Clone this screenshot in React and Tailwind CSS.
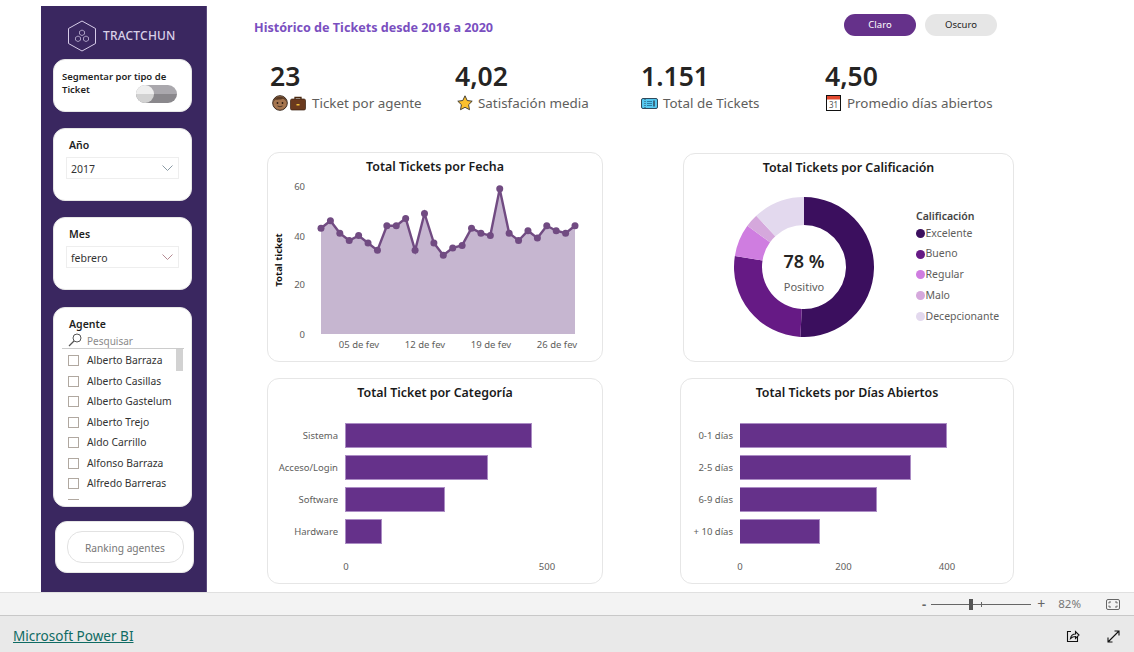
import React from "react";

const vals = [43,46,41,38,40,37,34,44,44,47,34,49,37,32,35,36,43,41,40,59,41,38,42,39,44,42,41,44];

function LineChart() {
  const ox = 268, oy = 176;
  const X = (i) => 321 - ox + (i * 254) / 27;
  const Y = (v) => 334 - oy - v * 2.46;
  const line = vals.map((v, i) => `${X(i).toFixed(1)},${Y(v).toFixed(1)}`).join(" ");
  const area = `${X(0)},${Y(0)} ${line} ${X(27)},${Y(0)}`;
  return (
    <svg width="334" height="184" viewBox="0 0 334 184" className="block">
      <polygon points={area} fill="#c6b6d0" />
      <polyline points={line} fill="none" stroke="#714b82" strokeWidth="2.4" />
      {vals.map((v, i) => <circle key={i} cx={X(i)} cy={Y(v)} r="3.5" fill="#714b82" />)}
      {[[0,335],[20,285],[40,237],[60,187]].map(([t, y]) => (
        <text key={t} x={305 - ox} y={y - oy + 3} textAnchor="end" fontSize="9.5" fill="#605e5c">{t}</text>
      ))}
      {[["05 de fev",359],["12 de fev",425],["19 de fev",491],["26 de fev",557]].map(([t, x]) => (
        <text key={t} x={x - ox} y={344 - oy + 4} textAnchor="middle" fontSize="9.5" fill="#605e5c">{t}</text>
      ))}
      <text transform={`translate(${282 - ox},${260 - oy}) rotate(-90)`} textAnchor="middle" fontSize="9.5" fontWeight="700" fill="#111">Total ticket</text>
    </svg>
  );
}

function arc(a0, a1, R, r, cx, cy) {
  const p = (a, q) => [cx + q * Math.sin((a * Math.PI) / 180), cy - q * Math.cos((a * Math.PI) / 180)];
  const large = a1 - a0 > 180 ? 1 : 0;
  const [x0, y0] = p(a0, R), [x1, y1] = p(a1, R), [x2, y2] = p(a1, r), [x3, y3] = p(a0, r);
  return `M${x0} ${y0}A${R} ${R} 0 ${large} 1 ${x1} ${y1}L${x2} ${y2}A${r} ${r} 0 ${large} 0 ${x3} ${y3}Z`;
}

const donut = [
  { n: "Excelente", c: "#3b0f5e", a: 0, b: 183 },
  { n: "Bueno", c: "#661a85", a: 183, b: 279 },
  { n: "Regular", c: "#cf7de0", a: 279, b: 306 },
  { n: "Malo", c: "#d5a8dc", a: 306, b: 317 },
  { n: "Decepcionante", c: "#e3d9ee", a: 317, b: 360 },
];

function Card({ title, className, children }) {
  return (
    <div className={`border border-[#e6e6e6] rounded-[12px] bg-white flex flex-col ${className}`}>
      <div className="pt-[5px] h-[23px] text-center text-[12.4px] leading-[18px] font-semibold text-[#1a1a1a]">{title}</div>
      {children}
    </div>
  );
}

function Bars({ rows, labelW, outline }) {
  return (
    <div className="mt-[21px] flex flex-col gap-[7px]">
      {rows.map(([l, w]) => (
        <div key={l} className="flex items-center h-[25px]">
          <div className="text-right text-[9.5px] pt-[2px] text-[#605e5c] shrink-0" style={{ width: labelW }}>{l}</div>
          <div className={`ml-[7px] h-[25px] bg-[#65318a] border border-[#ab8cc4] ${outline}`} style={{ width: w }} />
        </div>
      ))}
    </div>
  );
}

function Dropdown({ label, value, chevron, mt }) {
  return (
    <div className={`w-[139px] h-[73px] bg-white rounded-[12px] border border-[#e6e6e6] flex flex-col pl-[12px] ${mt}`}>
      <div className="pl-[3px] pt-[8px] h-[28px] text-[10.5px] leading-[16px] font-semibold text-[#1f1f1f]">{label}</div>
      <div className="w-[113px] h-[22px] border border-[#eeeeee] flex items-center justify-between pl-[4px] pr-[5px] text-[10.5px] text-[#333]">
        <span className="pt-[3px]">{value}</span>
        <svg width="11" height="6" viewBox="0 0 11 6"><path d="M0.5 0.5L5.5 5.5L10.5 0.5" fill="none" stroke={chevron} strokeWidth="1" /></svg>
      </div>
    </div>
  );
}

const agents = ["Alberto Barraza","Alberto Casillas","Alberto Gastelum","Alberto Trejo","Aldo Carrillo","Alfonso Barraza","Alfredo Barreras"];

function Sidebar() {
  return (
    <aside className="w-[166px] h-[586px] bg-[#3a2760] border-r border-[#5b4a7d] shrink-0 flex flex-col pl-[12px]">
      <div className="h-[53px] flex items-center pl-[14px] gap-[6px]">
        <svg width="30" height="32" viewBox="0 0 30 32" className="mt-[7px]" fill="none" stroke="#d6cbe8" strokeWidth="1">
          <path d="M15 1L28.5 8.5V23.5L15 31L1.5 23.5V8.5Z" />
          <path d="M15 10l2.500 1.400v2.800l-2.500 1.400-2.500-1.400v-2.800zM11 16l2.500 1.400v2.800l-2.500 1.400-2.500-1.400v-2.800zM19 16l2.500 1.400v2.800l-2.500 1.400-2.500-1.400v-2.800z" strokeWidth="0.7" />
        </svg>
        <span className="mt-[7px] text-[12px] tracking-[0.2px] text-[#d9d0e8] font-medium">TRACTCHUN</span>
      </div>
      <div className="w-[139px] h-[53px] bg-white rounded-[12px] border border-[#e6e6e6] flex flex-col pl-[8px] pt-[10px]">
        <div className="text-[9.5px] leading-[13px] font-semibold text-[#1f1f1f]">Segmentar por tipo de</div>
        <div className="flex justify-between items-start pr-[14px]">
          <div className="text-[9.5px] leading-[13px] font-semibold text-[#1f1f1f]">Ticket</div>
          <div className="w-[41px] h-[18px] mt-[2px] rounded-full bg-[linear-gradient(#aaa8ad_50%,#8a888c_50%)]">
            <div className="w-[18px] h-[18px] rounded-full bg-[linear-gradient(#eeeeee_50%,#d2d2d2_50%)]" />
          </div>
        </div>
      </div>
      <Dropdown label="Año" value="2017" chevron="#8a9aa5" mt="mt-[16px]" />
      <Dropdown label="Mes" value="febrero" chevron="#b58a92" mt="mt-[16px]" />
      <div className="mt-[17px] w-[139px] h-[200px] bg-white rounded-[12px] border border-[#e6e6e6] overflow-hidden flex flex-col">
        <div className="pl-[15px] pt-[8px] h-[24px] text-[10.5px] leading-[16px] font-semibold text-[#1f1f1f]">Agente</div>
        <div className="ml-[8px] w-[122px] h-[17px] border-b border-[#cccccc] flex items-center pl-[6px] gap-[5px]">
          <svg width="14" height="14" viewBox="0 0 14 14" fill="none" stroke="#555" strokeWidth="1"><circle cx="9" cy="5" r="4" /><path d="M6 8L1 13" strokeWidth="1.2" /></svg>
          <span className="pt-[3px] text-[10px] text-[#8a8a8a]">Pesquisar</span>
        </div>
        <div className="relative h-[151px] overflow-hidden flex flex-col pl-[14px] pt-[1.6px]">
          {agents.concat([""]).map((a, i) => (
            <div key={i} className="h-[20.5px] flex items-center gap-[8px] shrink-0">
              <span className="w-[11px] h-[11px] border border-[#b0a8a0] shrink-0" />
              <span className="text-[10.3px] text-[#333]">{a}</span>
            </div>
          ))}
          <div className="absolute right-[8px] top-0 w-[7px] h-[22px] bg-[#d2d2d2]" />
        </div>
      </div>
      <div className="mt-[14px] ml-[2px] w-[139px] h-[52px] bg-white rounded-[12px] border border-[#e6e6e6] flex items-center justify-center">
        <div className="ml-[1px] pt-[3px] w-[117px] h-[32px] rounded-[15px] border border-[#e2e2e2] flex items-center justify-center text-[10.2px] text-[#777]">Ranking agentes</div>
      </div>
    </aside>
  );
}

const Face = () => (
  <svg width="34" height="16" viewBox="0 0 34 16" className="ml-[2px]">
    <circle cx="8" cy="8" r="7.3" fill="#a5754f" stroke="#3a2a20" strokeWidth="1" />
    <path d="M1.2 7a7 7 0 0 1 13.6 0c-2-2.5-3-3-4-3.2-2 1-6.500 1-7 .7C3 5 2 6 1.200 7z" fill="#5a3a24" />
    <circle cx="5.500" cy="8" r=".9" fill="#2a1a10" /><circle cx="10.500" cy="8" r=".9" fill="#2a1a10" />
    <path d="M5.500 11q2.500 1.500 5 0" fill="none" stroke="#3a2a20" strokeWidth=".8" />
    <path d="M23 4V2.500h6V4" fill="none" stroke="#4a2810" strokeWidth="1.300" />
    <rect x="18.500" y="4" width="15" height="11" rx="1.500" fill="#6b3a1e" stroke="#3a2010" strokeWidth=".7" />
    <rect x="24.500" y="9" width="3" height="1.500" fill="#f5c43a" />
  </svg>
);
const Star = () => (
  <svg width="16" height="16" viewBox="0 0 16 16" className="ml-[2px]"><path d="M8 .8l2.200 4.700 5 .7-3.600 3.500.9 5L8 12.300 3.500 14.700l.9-5L.8 6.200l5-.7z" fill="#fbc02d" stroke="#33302a" strokeWidth=".9" /></svg>
);
const Ticket = () => (
  <svg width="17" height="11" viewBox="0 0 17 11"><rect x=".5" y=".5" width="16" height="10" rx="1.500" fill="#55c8f0" stroke="#2f4a5c" /><path d="M4 1v9" stroke="#2f4a5c" strokeDasharray="1 1" /><path d="M6 3.500h5M6 5.500h5M6 7.500h5" stroke="#2a7da5" /><path d="M13 2.500v6" stroke="#2f4a5c" strokeWidth="1.500" /></svg>
);
const Calendar = () => (
  <svg width="15" height="16" viewBox="0 0 15 16" className="ml-[1px]">
    <rect x=".5" y=".5" width="14" height="15" fill="#fff" stroke="#111" />
    <rect x="1" y="1" width="13" height="3.500" fill="#e2492f" />
    <text x="7.500" y="13" textAnchor="middle" fontSize="8" fill="#555">31</text>
  </svg>
);

function Kpi({ value, icon, label, labelGap, w }) {
  return (
    <div className="flex flex-col shrink-0" style={{ width: w }}>
      <div className="text-[26.5px] leading-[32px] font-semibold text-[#252423]">{value}</div>
      <div className="mt-[1px] h-[20px] flex items-center text-[13.4px] text-[#605e5c]" style={{ gap: labelGap }}>
        {icon}<span>{label}</span>
      </div>
    </div>
  );
}

export default function App() {
  return (
    <div className="w-[1134px] h-[652px] bg-white overflow-hidden flex flex-col font-['Noto_Sans',sans-serif]">
      <div className="h-[592px] flex pl-[41px] pt-[6px]">
        <Sidebar />
        <main className="flex-1 flex flex-col">
          <div className="pt-[8px] h-[30px] flex items-center justify-between pl-[47px] pr-[137px]">
            <div className="mt-[6px] text-[12.6px] font-bold text-[#7a4fc0]">Histórico de Tickets desde 2016 a 2020</div>
            <div className="flex gap-[9px]">
              <div className="w-[72px] h-[22px] rounded-full bg-[#65318a] text-white text-[9.5px] flex items-center justify-center">Claro</div>
              <div className="w-[72px] h-[22px] rounded-full bg-[#e6e6e6] text-[#222] text-[9.5px] flex items-center justify-center">Oscuro</div>
            </div>
          </div>
          <div className="mt-[24px] pl-[63px] flex">
            <Kpi value="23" icon={<Face />} label="Ticket por agente" labelGap="6px" w="185px" />
            <Kpi value="4,02" icon={<Star />} label="Satisfación media" labelGap="5px" w="186px" />
            <Kpi value="1.151" icon={<Ticket />} label="Total de Tickets" labelGap="5px" w="184px" />
            <Kpi value="4,50" icon={<Calendar />} label="Promedio días abiertos" labelGap="6px" w="180px" />
          </div>
          <div className="mt-[39px] pl-[60px] flex">
            <Card title="Total Tickets por Fecha" className="w-[336px] h-[210px]"><LineChart /></Card>
            <Card title="Total Tickets por Calificación" className="ml-[80px] mt-[1px] w-[331px] h-[209px]">
              <div className="flex pl-[50px] pt-[20px]">
                <div className="relative w-[140px] h-[140px]">
                  <svg width="140" height="140" viewBox="0 0 140 140">
                    {donut.map((d) => <path key={d.n} d={arc(d.a, d.b, 70, 42, 70, 70)} fill={d.c} />)}
                  </svg>
                  <div className="absolute inset-0 flex flex-col items-center pt-[52px]">
                    <div className="text-[18px] leading-[24px] font-semibold text-[#252423]">78 %</div>
                    <div className="text-[11px] leading-[16px] mt-[6px] text-[#605e5c]">Positivo</div>
                  </div>
                </div>
                <div className="ml-[42px] mt-[11px] flex flex-col">
                  <div className="text-[10.5px] h-[16px] leading-[16px] font-semibold text-[#444]">Calificación</div>
                  <div className="flex flex-col -mt-[1px]">
                    {donut.map((d) => (
                      <div key={d.n} className="h-[20.8px] flex items-center gap-[0.5px] text-[10.5px] text-[#605e5c]">
                        <span className="w-[9px] h-[9px] rounded-full shrink-0" style={{ background: d.c }} />
                        <span>{d.n}</span>
                      </div>
                    ))}
                  </div>
                </div>
              </div>
            </Card>
          </div>
          <div className="mt-[16px] pl-[60px] flex">
            <Card title="Total Ticket por Categoría" className="w-[336px] h-[206px]">
              <Bars labelW="70px" outline="" rows={[["Sistema",187],["Acceso/Login",143],["Software",100],["Hardware",37]]} />
              <div className="mt-[16px] ml-[68px] w-[221px] flex justify-between text-[9.5px] text-[#605e5c]">
                <span className="w-[20px] text-center">0</span><span className="w-[20px] text-center">500</span>
              </div>
            </Card>
            <Card title="Total Tickets por Días Abiertos" className="ml-[77px] w-[334px] h-[206px]">
              <Bars labelW="52px" outline="border-l-0" rows={[["0-1 días",207],["2-5 días",171],["6-9 días",137],["+ 10 días",80]]} />
              <div className="mt-[16px] ml-[49px] w-[227px] flex justify-between text-[9.5px] text-[#605e5c]">
                <span className="w-[20px] text-center">0</span><span className="w-[20px] text-center">200</span><span className="w-[20px] text-center">400</span>
              </div>
            </Card>
          </div>
        </main>
      </div>
      <div className="h-[24px] bg-[#f3f3f3] border-t border-b border-t-[#e0e0e0] border-b-[#c8c8c8] flex items-center justify-end pr-[14px] text-[#666]">
        <span className="text-[13px] font-bold leading-none">-</span>
        <div className="relative ml-[5px] w-[100px] h-[11px] flex items-center">
          <div className="w-full h-px bg-[#666]" />
          <div className="absolute left-[38px] top-0 w-[4px] h-[11px] bg-[#555]" />
          <div className="absolute left-[50px] top-[3px] w-px h-[5px] bg-[#666]" />
        </div>
        <span className="ml-[6px] text-[14px] leading-none">+</span>
        <span className="ml-[13px] text-[11.5px] text-[#777]">82%</span>
        <svg className="ml-[25px]" width="14" height="11" viewBox="0 0 14 11" fill="none" stroke="#666"><rect x=".5" y=".5" width="13" height="10" rx="1.500" /><path d="M3 4.500V3h2M9 3h2v1.500M11 6.500V8H9M5 8H3V6.500" /></svg>
      </div>
      <div className="flex-1 bg-[#e9e9e9] flex items-center justify-between pl-[13px] pr-[14px] pt-[4px]">
        <a className="mt-[1px] text-[13.55px] text-[#0f6b63] underline">Microsoft Power BI</a>
        <div className="flex items-center gap-[27px]">
          <svg width="14" height="14" viewBox="0 0 14 14" fill="none" stroke="#111" strokeWidth="1.100"><path d="M5 2.500H1.500v10h10V8" /><path d="M4.500 9.500C5 6.500 7 5 9.500 5V2.500L13 6l-3.500 3.500V7.500C7.500 7.500 6 8 4.500 9.500z" /></svg>
          <svg width="13" height="13" viewBox="0 0 13 13" fill="none" stroke="#111" strokeWidth="1.100"><path d="M1 12L12 1M7.500 1H12v4.500M1 7.500V12h4.500" /></svg>
        </div>
      </div>
    </div>
  );
}
